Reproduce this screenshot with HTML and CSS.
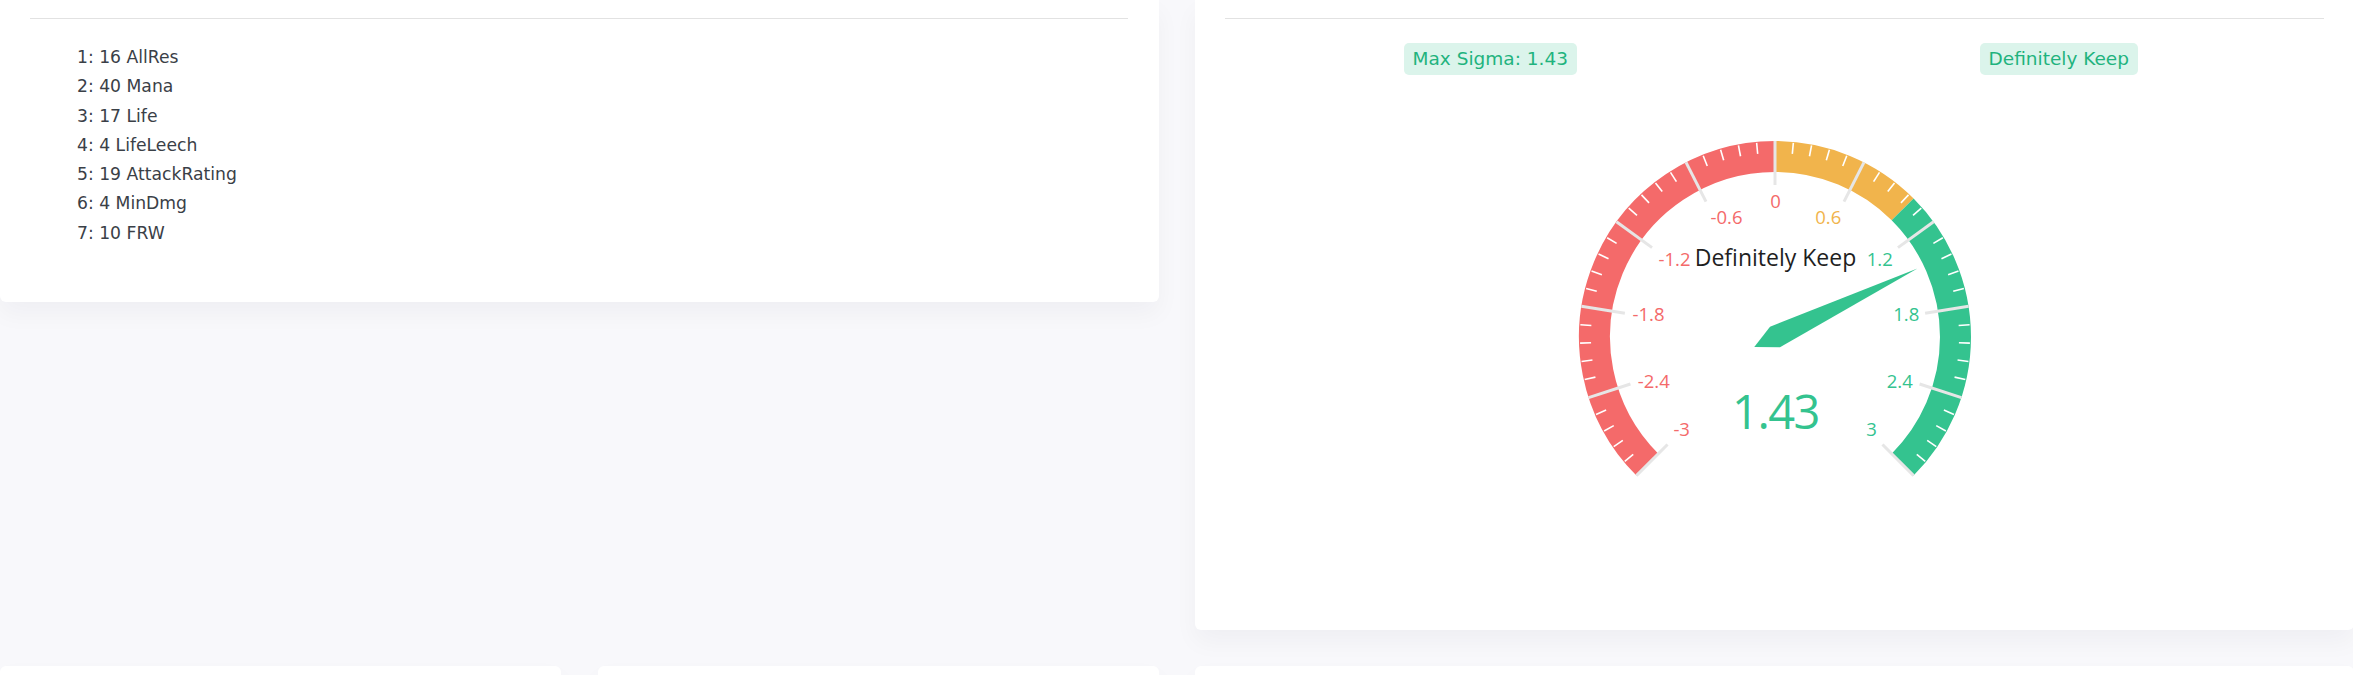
FILE: index.html
```html
<!DOCTYPE html>
<html lang="en">
<head>
<meta charset="utf-8">
<title>Affix evaluation</title>
<link rel="stylesheet" href="styles.css">
</head>
<body>
<div class="page">
  <section class="card card-top">
    <div class="divider"></div>
    <div class="affix-list">
      <div class="affix">1: 16 AllRes</div>
      <div class="affix">2: 40 Mana</div>
      <div class="affix">3: 17 Life</div>
      <div class="affix">4: 4 LifeLeech</div>
      <div class="affix">5: 19 AttackRating</div>
      <div class="affix">6: 4 MinDmg</div>
      <div class="affix">7: 10 FRW</div>
    </div>
  </section>

  <section class="card card-top card-gauge">
    <div class="divider"></div>
    <div class="badge-row">
      <span class="badge">Max Sigma: 1.43</span>
      <span class="badge">Definitely Keep</span>
    </div>
    <svg class="gauge" width="460" height="500" viewBox="0 0 460 500">
      <g class="band" fill="none" stroke-width="31">
        <path d="M102.37 364.63 A180.5 180.5 0 0 1 230 56.5" stroke="#f46a6a"/>
        <path d="M230 56.5 A180.5 180.5 0 0 1 357.63 109.37" stroke="#f1b44c"/>
        <path d="M357.63 109.37 A180.5 180.5 0 0 1 357.63 364.63" stroke="#34c38f"/>
      </g>
      <g class="splits" stroke="#e6e6e6" stroke-width="3">
        <line x1="382" y1="237" x2="426" y2="237" transform="rotate(-225 230 237)"/>
        <line x1="382" y1="237" x2="426" y2="237" transform="rotate(-198 230 237)"/>
        <line x1="382" y1="237" x2="426" y2="237" transform="rotate(-171 230 237)"/>
        <line x1="382" y1="237" x2="426" y2="237" transform="rotate(-144 230 237)"/>
        <line x1="382" y1="237" x2="426" y2="237" transform="rotate(-117 230 237)"/>
        <line x1="382" y1="237" x2="426" y2="237" transform="rotate(-90 230 237)"/>
        <line x1="382" y1="237" x2="426" y2="237" transform="rotate(-63 230 237)"/>
        <line x1="382" y1="237" x2="426" y2="237" transform="rotate(-36 230 237)"/>
        <line x1="382" y1="237" x2="426" y2="237" transform="rotate(-9 230 237)"/>
        <line x1="382" y1="237" x2="426" y2="237" transform="rotate(18 230 237)"/>
        <line x1="382" y1="237" x2="426" y2="237" transform="rotate(45 230 237)"/>
      </g>
      <g class="ticks" stroke="#ffffff" stroke-width="1.6">
        <line x1="414" y1="237" x2="425" y2="237" transform="rotate(-219.6 230 237)"/>
        <line x1="414" y1="237" x2="425" y2="237" transform="rotate(-214.2 230 237)"/>
        <line x1="414" y1="237" x2="425" y2="237" transform="rotate(-208.8 230 237)"/>
        <line x1="414" y1="237" x2="425" y2="237" transform="rotate(-203.4 230 237)"/>
        <line x1="414" y1="237" x2="425" y2="237" transform="rotate(-192.6 230 237)"/>
        <line x1="414" y1="237" x2="425" y2="237" transform="rotate(-187.2 230 237)"/>
        <line x1="414" y1="237" x2="425" y2="237" transform="rotate(-181.8 230 237)"/>
        <line x1="414" y1="237" x2="425" y2="237" transform="rotate(-176.4 230 237)"/>
        <line x1="414" y1="237" x2="425" y2="237" transform="rotate(-165.6 230 237)"/>
        <line x1="414" y1="237" x2="425" y2="237" transform="rotate(-160.2 230 237)"/>
        <line x1="414" y1="237" x2="425" y2="237" transform="rotate(-154.8 230 237)"/>
        <line x1="414" y1="237" x2="425" y2="237" transform="rotate(-149.4 230 237)"/>
        <line x1="414" y1="237" x2="425" y2="237" transform="rotate(-138.6 230 237)"/>
        <line x1="414" y1="237" x2="425" y2="237" transform="rotate(-133.2 230 237)"/>
        <line x1="414" y1="237" x2="425" y2="237" transform="rotate(-127.8 230 237)"/>
        <line x1="414" y1="237" x2="425" y2="237" transform="rotate(-122.4 230 237)"/>
        <line x1="414" y1="237" x2="425" y2="237" transform="rotate(-111.6 230 237)"/>
        <line x1="414" y1="237" x2="425" y2="237" transform="rotate(-106.2 230 237)"/>
        <line x1="414" y1="237" x2="425" y2="237" transform="rotate(-100.8 230 237)"/>
        <line x1="414" y1="237" x2="425" y2="237" transform="rotate(-95.4 230 237)"/>
        <line x1="414" y1="237" x2="425" y2="237" transform="rotate(-84.6 230 237)"/>
        <line x1="414" y1="237" x2="425" y2="237" transform="rotate(-79.2 230 237)"/>
        <line x1="414" y1="237" x2="425" y2="237" transform="rotate(-73.8 230 237)"/>
        <line x1="414" y1="237" x2="425" y2="237" transform="rotate(-68.4 230 237)"/>
        <line x1="414" y1="237" x2="425" y2="237" transform="rotate(-57.6 230 237)"/>
        <line x1="414" y1="237" x2="425" y2="237" transform="rotate(-52.2 230 237)"/>
        <line x1="414" y1="237" x2="425" y2="237" transform="rotate(-46.8 230 237)"/>
        <line x1="414" y1="237" x2="425" y2="237" transform="rotate(-41.4 230 237)"/>
        <line x1="414" y1="237" x2="425" y2="237" transform="rotate(-30.6 230 237)"/>
        <line x1="414" y1="237" x2="425" y2="237" transform="rotate(-25.2 230 237)"/>
        <line x1="414" y1="237" x2="425" y2="237" transform="rotate(-19.8 230 237)"/>
        <line x1="414" y1="237" x2="425" y2="237" transform="rotate(-14.4 230 237)"/>
        <line x1="414" y1="237" x2="425" y2="237" transform="rotate(-3.6 230 237)"/>
        <line x1="414" y1="237" x2="425" y2="237" transform="rotate(1.8 230 237)"/>
        <line x1="414" y1="237" x2="425" y2="237" transform="rotate(7.2 230 237)"/>
        <line x1="414" y1="237" x2="425" y2="237" transform="rotate(12.6 230 237)"/>
        <line x1="414" y1="237" x2="425" y2="237" transform="rotate(23.4 230 237)"/>
        <line x1="414" y1="237" x2="425" y2="237" transform="rotate(28.8 230 237)"/>
        <line x1="414" y1="237" x2="425" y2="237" transform="rotate(34.2 230 237)"/>
        <line x1="414" y1="237" x2="425" y2="237" transform="rotate(39.6 230 237)"/>
      </g>
      <g class="labels">
        <text class="lbl red" x="230.5" y="100">0</text>
        <text class="lbl red" x="181.5" y="116.7">-0.6</text>
        <text class="lbl orange" x="283.2" y="116.7">0.6</text>
        <text class="lbl red" x="129.5" y="158.3">-1.2</text>
        <text class="lbl green" x="334.8" y="158.3">1.2</text>
        <text class="lbl red" x="103.5" y="213.3">-1.8</text>
        <text class="lbl green" x="361.2" y="213.3">1.8</text>
        <text class="lbl red" x="108.8" y="280">-2.4</text>
        <text class="lbl green" x="354.8" y="280">2.4</text>
        <text class="lbl red" x="136.7" y="328.3">-3</text>
        <text class="lbl green" x="326.5" y="328.3">3</text>
      </g>
      <text class="gauge-title" x="230.5" y="157">Definitely Keep</text>
      <polygon class="needle" points="388,237 230,248.5 207,237 230,225.5" transform="rotate(-25.65 230 237)"/>
      <text class="gauge-value" x="230.5" y="311">1.43</text>
    </svg>
  </section>

  <div class="sub-row">
    <section class="card card-bottom"></section>
    <section class="card card-bottom"></section>
  </div>
  <section class="card card-bottom"></section>
</div>
</body>
</html>
```
FILE: styles.css
```css
html, body {
  margin: 0;
  padding: 0;
}
body {
  background: #f8f8fb;
  overflow: hidden;
  font-family: "DejaVu Sans", "Liberation Sans", sans-serif;
  color: #495057;
}
.page {
  display: grid;
  grid-template-columns: 1159px 1159px;
  column-gap: 36px;
  row-gap: 36px;
  align-items: start;
}
.card {
  background: #ffffff;
  border-radius: 6px;
  box-shadow: 0 12px 24px rgba(18, 38, 63, 0.04);
  box-sizing: border-box;
}
.card-top {
  border-top-left-radius: 0;
  border-top-right-radius: 0;
  padding: 18px 31px 0 30px;
}
.card-gauge {
  padding: 18px 30px 30px 30px;
}
.divider {
  height: 1px;
  background: #e2e2e2;
}
.affix-list {
  padding: 24px 0 54px 47px;
  font-size: 17.2px;
  line-height: 29.3px;
  color: #3a4047;
}
.badge-row {
  display: grid;
  grid-template-columns: 1fr 1fr;
  justify-items: center;
  margin: 24px -19px 0 -19px;
}
.badge {
  display: inline-block;
  height: 32px;
  line-height: 32px;
  padding: 0 9px;
  border-radius: 5px;
  background: #dbf4eb;
  color: #1fb37e;
  font-size: 18.5px;
}
.gauge {
  display: block;
  margin: 25px auto 0 auto;
  font-family: "Open Sans", "Noto Sans", sans-serif;
}
.lbl {
  font-size: 18.5px;
  text-anchor: middle;
  dominant-baseline: central;
}
.red { fill: #f46a6a; }
.orange { fill: #f1b44c; }
.green { fill: #34c38f; }
.gauge-title {
  font-size: 23px;
  fill: #1f1f1f;
  text-anchor: middle;
  dominant-baseline: central;
}
.needle {
  fill: #34c38f;
}
.gauge-value {
  font-size: 47px;
  letter-spacing: -1.5px;
  fill: #34c38f;
  text-anchor: middle;
  dominant-baseline: central;
}
.sub-row {
  display: grid;
  grid-template-columns: 1fr 1fr;
  column-gap: 37px;
}
.card-bottom {
  height: 300px;
}
```
